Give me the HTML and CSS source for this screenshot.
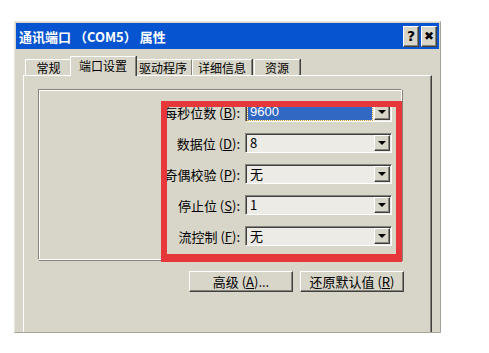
FILE: index.html
```html
<!DOCTYPE html>
<html lang="zh-CN">
<head>
    <meta charset="UTF-8">
    <meta name="viewport" content="width=device-width, initial-scale=1.0">
    <title>通讯端口 (COM5) 属性</title>
    <link rel="stylesheet" href="styles.css">
</head>
<body>

    <div class="window">
        <div class="titlebar">
            <span class="title">通讯端口 （COM5） 属性</span>
            <div class="title-buttons">
                <button class="title-btn">?</button>
                <button class="title-btn close">&#x2716;</button>
            </div>
        </div>

        <div class="tabs">
            <div class="tab">常规</div>
            <div class="tab active">端口设置</div>
            <div class="tab">驱动程序</div>
            <div class="tab">详细信息</div>
            <div class="tab last">资源</div>
        </div>

        <div class="panel">
            <div class="group">
                <div class="form">
                    <label>每秒位数 (<u>B</u>):</label>
                    <div class="combo focus"><span class="value">9600</span><span class="arrow"></span></div>

                    <label>数据位 (<u>D</u>):</label>
                    <div class="combo"><span class="value">8</span><span class="arrow"></span></div>

                    <label>奇偶校验 (<u>P</u>):</label>
                    <div class="combo"><span class="value">无</span><span class="arrow"></span></div>

                    <label>停止位 (<u>S</u>):</label>
                    <div class="combo"><span class="value">1</span><span class="arrow"></span></div>

                    <label>流控制 (<u>F</u>):</label>
                    <div class="combo"><span class="value">无</span><span class="arrow"></span></div>
                </div>
                <!-- red annotation frame drawn over the settings -->
                <div class="highlight"></div>
            </div>

            <div class="actions">
                <button class="btn">高级 (<u>A</u>)...</button>
                <button class="btn">还原默认值 (<u>R</u>)</button>
            </div>
        </div>
    </div>

</body>
</html>
```

FILE: styles.css
```css
body {
    margin: 0;
    background: #fff;
    font-family: "Noto Sans CJK SC", "Liberation Sans", sans-serif;
    font-size: 12px;
    color: #000;
}

.window {
    margin: 21px 0 0 14px;
    width: 423px;
    height: 308px;
    padding: 1px;
    background: #d8d6c9;
    border: 1px solid;
    border-color: #e9e7dc #a6a49a #a6a49a #e9e7dc;
    overflow: hidden;
}

.titlebar {
    height: 26px;
    background: #0654d0;
    display: flex;
    align-items: center;
    justify-content: space-between;
    padding: 0 2px 0 3px;
}

.title {
    color: #fff;
    font-weight: bold;
    font-size: 13px;
    white-space: nowrap;
}

.title-buttons {
    display: flex;
    gap: 2px;
}

.title-btn {
    width: 16px;
    height: 21px;
    padding: 0;
    background: #d8d6c9;
    border: 1px solid;
    border-color: #fff #404040 #404040 #fff;
    box-shadow: inset -1px -1px 0 #86847a;
    font-family: "DejaVu Sans", sans-serif;
    font-weight: bold;
    font-size: 14px;
    line-height: 18px;
    color: #000;
}

.close {
    font-size: 12px;
}

.tabs {
    display: flex;
    align-items: flex-end;
    margin: 7px 0 0 9px;
    height: 19px;
    position: relative;
    z-index: 1;
}

.tab {
    height: 16px;
    box-sizing: border-box;
    padding: 0;
    text-align: center;
    white-space: nowrap;
    line-height: 15px;
    background: #d8d6c9;
    border-top: 1px solid #fff;
    border-left: 1px solid #fff;
    border-right: 1px solid #86847a;
    box-shadow: 1px 0 0 #404040;
    font-size: 12px;
}

.tab:first-child { width: 47px; }
.tab.active {
    width: 66px;
    height: 20px;
    margin: 0 -2px -1px;
    line-height: 17px;
    position: relative;
    z-index: 2;
}
.tab:nth-child(3) { width: 58px; }
.tab:nth-child(4) { width: 60px; }
.tab.last { width: 46px; margin-left: 2px; }

.panel {
    margin-left: 7px;
    width: 409px;
    height: 290px;
    box-sizing: border-box;
    border: 1px solid;
    border-color: #fff #404040 #404040 #fff;
    box-shadow: inset -1px 0 0 #86847a;
    padding: 13px 0 0 14px;
}

.group {
    position: relative;
    width: 364px;
    height: 171px;
    box-sizing: border-box;
    border: 1px solid;
    border-color: #86847a #fff #fff #86847a;
    box-shadow: inset 1px 1px 0 #fff, 1px 1px 0 #86847a;
}

.form {
    display: grid;
    grid-template-columns: 1fr 147px;
    column-gap: 5px;
    row-gap: 11px;
    align-items: center;
    padding: 12px 9px 0 0;
}

.form label {
    text-align: right;
    white-space: nowrap;
    font-size: 13px;
}

.combo {
    height: 20px;
    box-sizing: border-box;
    display: flex;
    align-items: center;
    justify-content: space-between;
    background: #ecebe6;
    border: 1px solid;
    border-color: #86847a #fff #fff #86847a;
    box-shadow: inset 1px 1px 0 #404040;
    padding: 1px 1px 1px 2px;
}

.value {
    flex: 1;
    height: 16px;
    line-height: 16px;
    padding-left: 2px;
    font-size: 13px;
}

.focus .value {
    background: #3168c4;
    color: #fff;
    outline: 1px dotted #d8a040;
    margin-right: 2px;
    font-family: "Liberation Sans", sans-serif;
}

.arrow {
    width: 16px;
    height: 16px;
    box-sizing: border-box;
    background: #d8d6c9;
    border: 1px solid;
    border-color: #fff #404040 #404040 #fff;
    box-shadow: inset -1px -1px 0 #86847a;
    position: relative;
}

.arrow::after {
    content: "";
    position: absolute;
    left: 3px;
    top: 5px;
    border-left: 4px solid transparent;
    border-right: 4px solid transparent;
    border-top: 4px solid #000;
}

.highlight {
    position: absolute;
    left: 122px;
    top: 11px;
    width: 241px;
    height: 161px;
    box-sizing: border-box;
    border: 6px solid #e8373b;
    border-bottom-width: 8px;
    pointer-events: none;
}

.actions {
    display: flex;
    justify-content: flex-end;
    gap: 7px;
    margin-top: 11px;
    width: 366px;
}

.btn {
    width: 104px;
    height: 21px;
    padding: 0;
    background: #d8d6c9;
    border: 1px solid;
    border-color: #fff #404040 #404040 #fff;
    box-shadow: inset -1px -1px 0 #86847a;
    font-family: "Noto Sans CJK SC", "Liberation Sans", sans-serif;
    font-size: 13px;
    color: #000;
}
```
